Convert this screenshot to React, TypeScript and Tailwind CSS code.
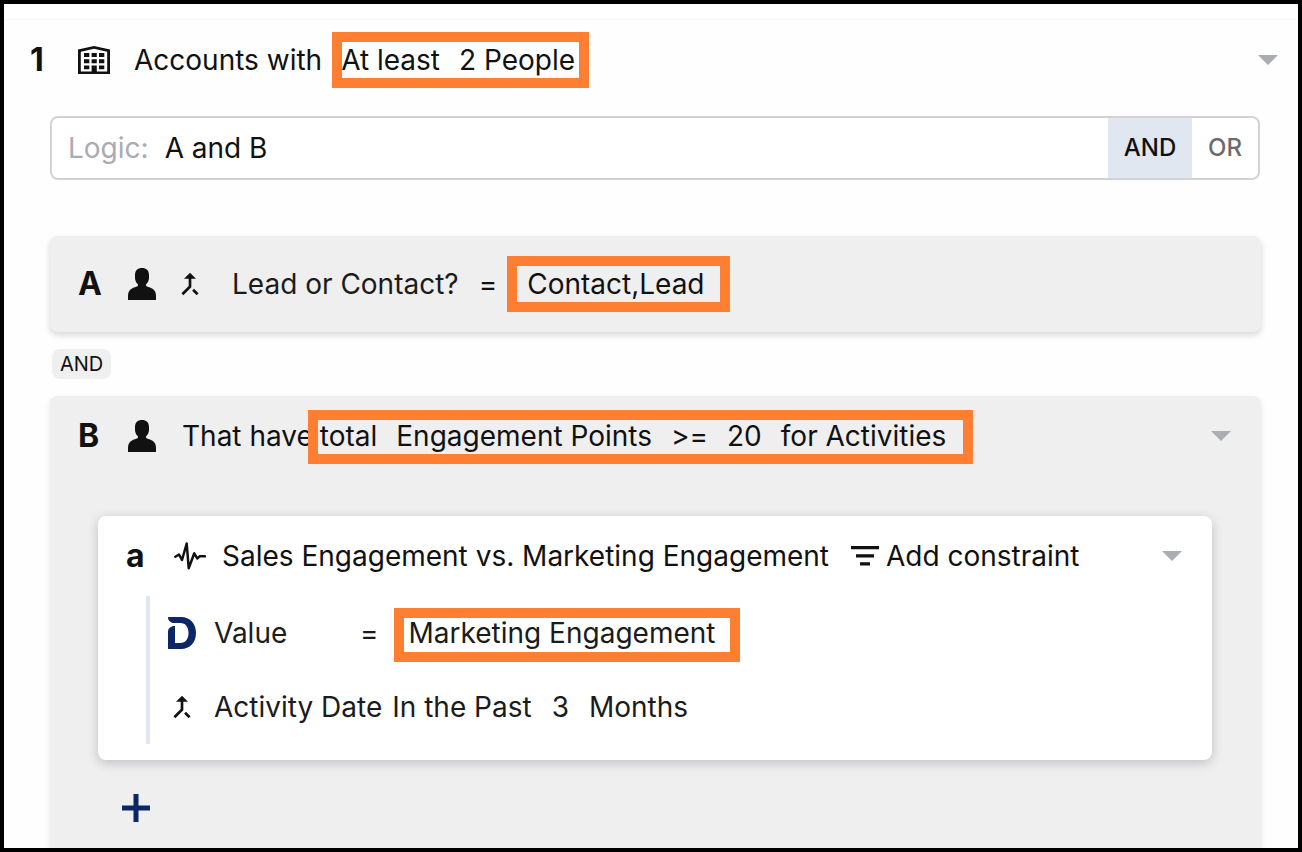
import { useState, type ReactNode } from "react";

function BuildingIcon() {
  return (
    <svg width="32" height="28" viewBox="0 0 32 28" aria-hidden="true" className="shrink-0">
      <path fill="#111" fillRule="evenodd" d="M0 3.6 16 0l16 3.6V28H0ZM2.8 5.8v19.6h26.4V5.8L16 2.8Z" />
      <path fill="#111" d="M6 7h5.3v4H6zM13.6 7h5.2v4h-5.2zM21 7h5.3v4H21zM6 13.2h5.3v4H6zM13.6 13.2h5.2v4h-5.2zM21 13.2h5.3v4H21zM6 19.5h5.3v3.8H6zM13.6 19.5h5.2V26h-5.2zM21 19.5h5.3v3.8H21z" />
    </svg>
  );
}

function PersonIcon() {
  return (
    <svg width="28" height="32" viewBox="0 0 28 32" aria-hidden="true" className="shrink-0">
      <path
        fill="#111"
        d="M14 0c4.400 0 7 2.600 7 7v2.500c0 2.800-1 5.200-2.900 6.700V18c1 .9 3.300 1.200 5.500 2.200C26.600 21.600 28 24.300 28 27.500V32H0v-4.500c0-3.200 1.400-5.900 4.400-7.300 2.200-1 4.500-1.300 5.500-2.200v-1.800C8 14.700 7 12.300 7 9.500V7c0-4.400 2.600-7 7-7Z"
      />
    </svg>
  );
}

function MergeIcon() {
  return (
    <svg width="32" height="32" viewBox="0 0 24 24" aria-hidden="true" className="shrink-0">
      <path
        fill="#111"
        d="M17 20.410 18.410 19 15 15.590 13.590 17 17 20.410ZM7.500 8H11v5.590L5.590 19 7 20.410l6-6V8h3.500L12 3.500 7.500 8Z"
      />
    </svg>
  );
}

function PulseIcon() {
  return (
    <svg width="32" height="28" viewBox="0 0 32 28" aria-hidden="true" className="shrink-0">
      <path
        d="M1.300 14.700 5 12.500 8 18l4.700-16.500 2 24.800 5.600-15 2.900 5.200 2.300-2.200H31"
        fill="none"
        stroke="#111"
        strokeWidth="2.500"
        strokeLinecap="round"
        strokeLinejoin="round"
      />
    </svg>
  );
}

function BrandIcon() {
  return (
    <svg width="28" height="32" viewBox="0 0 28 32" aria-hidden="true" className="shrink-0">
      <path
        fill="#0b2765"
        d="M0 0h13c9 0 15 6.500 15 16s-6 16-15 16H0V15c0-3.500 2.500-6 7-6v17h5.500c5 0 8-4 8-10s-3-10-8-10H6C2.500 6 0 3.500 0 0Z"
      />
    </svg>
  );
}

function FilterIcon() {
  return (
    <svg width="28" height="20" viewBox="0 0 28 20" aria-hidden="true" className="shrink-0">
      <path fill="#111" d="M0 0h28v3.300H0zM5 8.300h18v3.300H5zM9 16.300h10v3.300H9z" />
    </svg>
  );
}

function Caret({ label }: { label: string }) {
  return (
    <button type="button" aria-label={label} className="ml-auto shrink-0 cursor-pointer">
      <svg width="20" height="10" viewBox="0 0 20 10" aria-hidden="true">
        <path fill="#abacb4" d="M0 0h20L10 10Z" />
      </svg>
    </button>
  );
}

function Value({ children }: { children: ReactNode }) {
  return (
    <button type="button" className="cursor-pointer whitespace-nowrap">
      {children}
    </button>
  );
}

/* Orange frame laid over the values it surrounds. */
function Highlight({ frame, children }: { frame: string; children: ReactNode }) {
  return (
    <span className="relative flex items-center gap-[19px]">
      {children}
      <span aria-hidden="true" className={`pointer-events-none absolute border-10 border-[#ff7f32] ${frame}`} />
    </span>
  );
}

export default function App() {
  const [logic, setLogic] = useState("A and B");

  return (
    <main className="flex min-h-screen flex-col border-4 border-black bg-white pt-[15px] font-['Inter',sans-serif] text-[28px] leading-9 text-[#111]">
      <div className="flex grow flex-col border-t border-[#f7f7f7] bg-[#fefefe]">
        <header className="flex h-20 items-center pr-5 pl-[26px]">
          <span className="w-12 text-[32px] font-bold">1</span>
          <BuildingIcon />
          <h1 className="mr-[19px] ml-6 whitespace-nowrap">Accounts with</h1>
          <Highlight frame="-top-[10px] -bottom-[10px] -left-[9px] -right-[14px]">
            <Value>At least</Value>
            <Value>2 People</Value>
          </Highlight>
          <Caret label="Toggle accounts group" />
        </header>

        <div className="mt-4 mr-[38px] ml-[46px] flex h-16 overflow-hidden rounded-lg border-2 border-[#d3d3d4] bg-white">
          <label htmlFor="logic" className="flex items-center pl-4 text-[#aaabb3]">
            Logic:
          </label>
          <input
            id="logic"
            value={logic}
            onChange={(e) => setLogic(e.target.value)}
            className="ml-4 min-w-0 grow bg-transparent outline-none"
          />
          <button type="button" className="w-[84px] cursor-pointer bg-[#e1e7f1] text-2xl font-medium">
            AND
          </button>
          <button type="button" className="w-[66px] cursor-pointer text-2xl font-medium text-[#6b6b6e]">
            OR
          </button>
        </div>

        <section className="mt-14 mr-[37px] ml-[46px] flex h-24 items-center rounded-lg bg-[#efefef] pl-7 shadow-[0_3px_6px_rgba(0,0,0,0.16)]">
          <span className="w-[50px] text-[32px] font-bold">A</span>
          <PersonIcon />
          <span className="ml-[18px] flex">
            <MergeIcon />
          </span>
          <span className="ml-[26px] whitespace-nowrap text-[#1b1b1b]">Lead or Contact?</span>
          <span className="mr-[30px] ml-5">=</span>
          <Highlight frame="-top-[10px] -bottom-[10px] -left-[20px] -right-[25px]">
            <Value>Contact,Lead</Value>
          </Highlight>
        </section>

        <div className="mt-[17px] ml-12 flex">
          <span className="rounded-lg bg-[#efefef] px-2 text-xl leading-[30px]">AND</span>
        </div>

        <section className="mt-[17px] mr-[37px] ml-[46px] grow rounded-t-lg bg-[#efefef] pr-[49px] pb-6 pl-12 shadow-[0_3px_6px_rgba(0,0,0,0.1)]">
          <div className="-mr-[19px] -ml-5 flex h-20 items-center">
            <span className="w-[50px] text-[32px] font-bold">B</span>
            <PersonIcon />
            <span className="mr-[7px] ml-[26px] whitespace-nowrap">That have</span>
            <Highlight frame="-top-2 -bottom-[10px] -left-[12px] -right-[27px]">
              <Value>total</Value>
              <Value>Engagement Points</Value>
              <Value>&gt;=</Value>
              <Value>20</Value>
              <Value>for Activities</Value>
            </Highlight>
            <Caret label="Toggle condition B" />
          </div>

          <article className="mt-10 rounded-lg bg-white pb-4 shadow-[0_3px_12px_rgba(0,0,30,0.2)]">
            <div className="flex h-20 items-center pr-[30px] pl-7">
              <span className="w-12 text-[32px] font-bold">a</span>
              <span className="mr-4 flex">
                <PulseIcon />
              </span>
              <Value>Sales Engagement vs. Marketing Engagement</Value>
              <button type="button" className="ml-[22px] flex cursor-pointer items-center gap-[7px] whitespace-nowrap">
                <FilterIcon />
                Add constraint
              </button>
              <Caret label="Toggle activity a" />
            </div>
            <div className="ml-12 border-l-4 border-[#e1e7f1] pl-4 text-[#1b1b1b]">
              <div className="flex h-[74px] items-center">
                <span className="flex w-12 pl-0.5">
                  <BrandIcon />
                </span>
                <span className="w-[146px]">Value</span>
                <span className="mr-[30px]">=</span>
                <Highlight frame="-top-[7px] -bottom-[11px] -left-[15px] -right-[25px]">
                  <Value>Marketing Engagement</Value>
                </Highlight>
              </div>
              <div className="flex h-[74px] items-center">
                <span className="flex w-12">
                  <MergeIcon />
                </span>
                <span className="mr-[10px] whitespace-nowrap">Activity Date</span>
                <span className="flex gap-5">
                  <Value>In the Past</Value>
                  <Value>3</Value>
                  <Value>Months</Value>
                </span>
              </div>
            </div>
          </article>

          <button type="button" aria-label="Add condition" className="mt-[34px] ml-6 flex cursor-pointer">
            <svg width="28" height="28" viewBox="0 0 28 28" aria-hidden="true">
              <path fill="#0b2765" d="M11.500 0h5v11.500H28v5H16.500V28h-5V16.500H0v-5h11.500Z" />
            </svg>
          </button>
        </section>
      </div>
    </main>
  );
}
